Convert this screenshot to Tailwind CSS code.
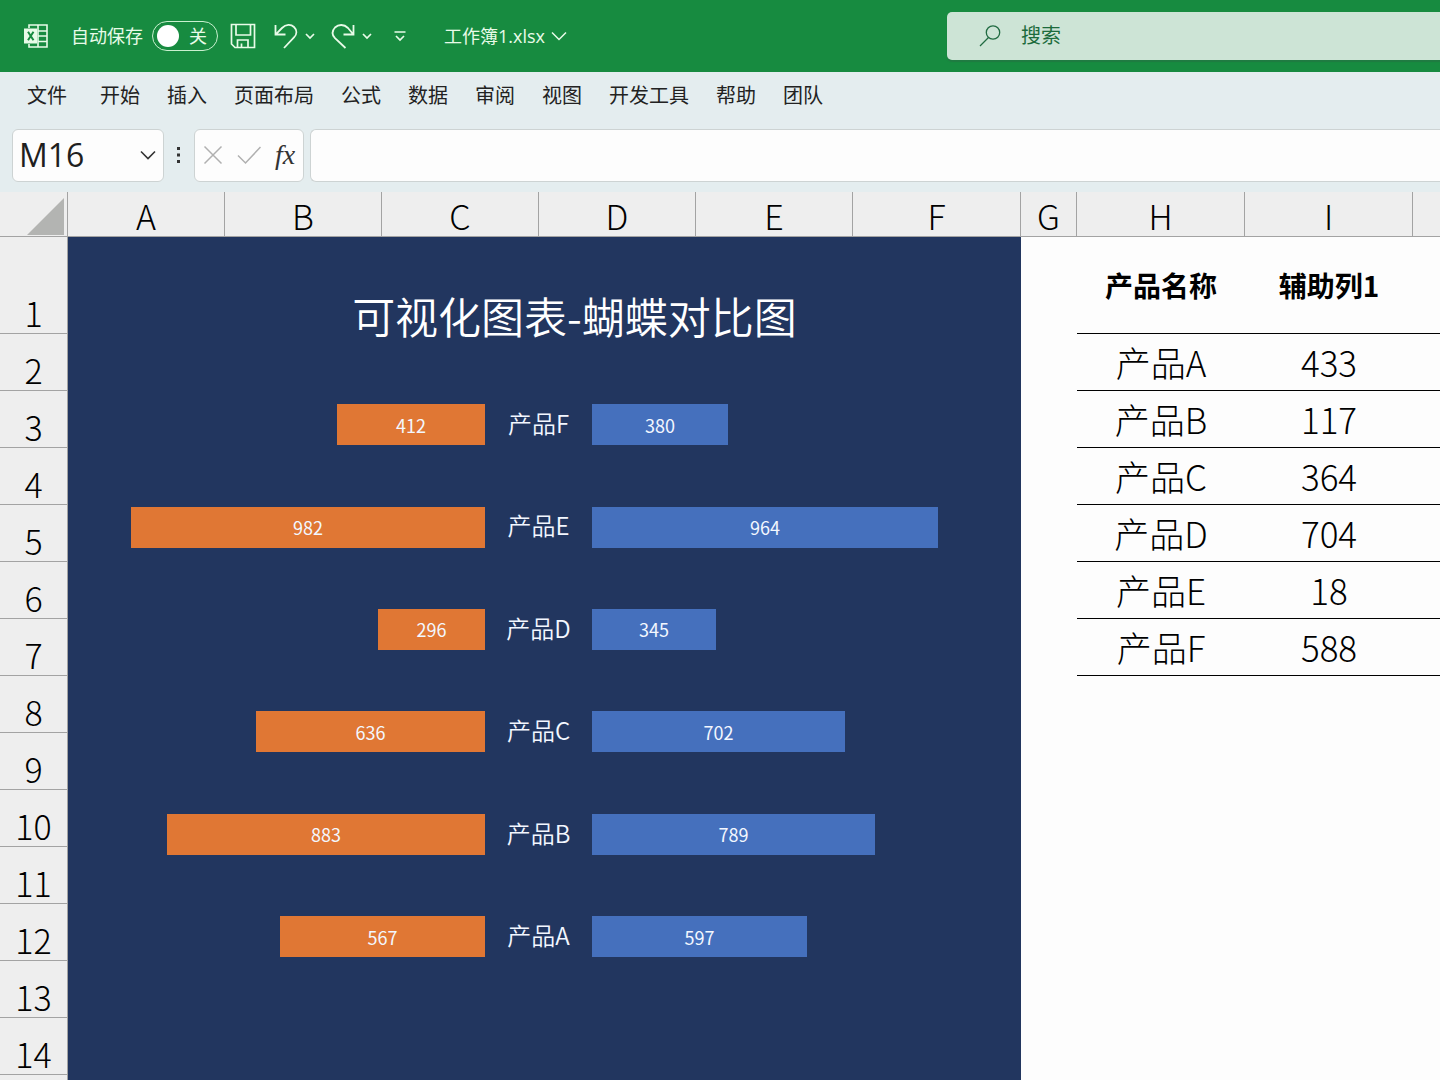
<!DOCTYPE html>
<html lang="zh-CN">
<head>
<meta charset="utf-8">
<meta name="viewport" content="width=device-width, initial-scale=1">
<title>工作簿1.xlsx</title>
<script src="https://cdn.jsdelivr.net/npm/@tailwindcss/browser@4"></script>
</head>
<body class="flex h-screen flex-col overflow-hidden bg-[#fdfdfd] font-['Open_Sans','Noto_Sans_CJK_SC',sans-serif]">

<!-- Title bar -->
<header class="flex h-18 shrink-0 items-center bg-[#178b40] text-lg text-[#e8fbe8]">
  <div class="flex w-[947px] shrink-0 items-center pl-6">
    <svg class="size-6" viewBox="0 0 24 24" fill="none" stroke="#e8fbe8" stroke-width="1.6" aria-hidden="true">
      <path d="M5 4V1h18v22H5v-3M14 1v22M14 7h9M14 12h9M14 17.500h9"/>
      <path d="M0 4.500h13v15H0z" fill="#e8fbe8" stroke="none"/>
      <path d="M4 7.800l5.500 8.400M9.500 7.800L4 16.200" stroke="#178b40" stroke-width="2"/>
    </svg>
    <label for="autosave" class="ml-[23px]">自动保存</label>
    <span class="relative ml-[9px] flex h-[30px] w-[66px] items-center rounded-full border border-[#c9f0cf]">
      <input id="autosave" type="checkbox" role="switch" class="absolute inset-0 size-full cursor-pointer appearance-none rounded-full">
      <span class="pointer-events-none ml-1 size-[22px] rounded-full bg-white"></span>
      <span class="pointer-events-none ml-2.5">关</span>
    </span>
    <button type="button" class="ml-3" aria-label="保存">
      <svg class="size-[26px]" viewBox="0 0 26 26" fill="none" stroke="#e8fbe8" stroke-width="1.700"><path d="M1.500 1.500h23v23H5l-3.500-3.500zM6 1.500v10.500h14.500v-10.500M7.500 24.500v-7.500h10.500v7.500M11.500 24.500v-4"/></svg>
    </button>
    <button type="button" class="ml-[18px]" aria-label="撤消">
      <svg class="h-[26px] w-6" viewBox="0 0 24 26" fill="none" stroke="#e8fbe8" stroke-width="1.800"><path d="M1.500 2v9.500h10M1.800 11.300L8 5C12 1 17 1.200 20 4c3.300 3.200 3 7.300 0 10.400L10 25"/></svg>
    </button>
    <button type="button" class="ml-1.5" aria-label="撤消选项">
      <svg class="h-2 w-3" viewBox="0 0 12 8" fill="none" stroke="#e8fbe8" stroke-width="1.700"><path d="M2 2l4 4 4-4"/></svg>
    </button>
    <button type="button" class="ml-[15px]" aria-label="恢复">
      <svg class="h-[26px] w-6" viewBox="0 0 24 26" fill="none" stroke="#e8fbe8" stroke-width="1.800"><path d="M22.500 2v9.500h-10M22.200 11.300L17 5C13 1 7.500 1.200 4 4.500 0.800 8 1 12 4 15.200L14.500 25"/></svg>
    </button>
    <button type="button" class="ml-1.5" aria-label="恢复选项">
      <svg class="h-2 w-3" viewBox="0 0 12 8" fill="none" stroke="#e8fbe8" stroke-width="1.700"><path d="M2 2l4 4 4-4"/></svg>
    </button>
    <button type="button" class="ml-5" aria-label="自定义快速访问工具栏">
      <svg class="h-3 w-3.5" viewBox="0 0 14 12" fill="none" stroke="#e8fbe8" stroke-width="1.700"><path d="M1.500 2h11M3 6l4 4 4-4"/></svg>
    </button>
    <button type="button" class="ml-[37px] flex items-center gap-1.5">
      工作簿1.xlsx
      <svg class="h-2.5 w-4" viewBox="0 0 16 10" fill="none" stroke="#e8fbe8" stroke-width="1.500"><path d="M1 1.500l7 7 7-7"/></svg>
    </button>
  </div>
  <div class="flex h-12 min-w-0 grow items-center rounded-l-[5px] bg-[#cde4d6] pl-8 shadow-[0_2px_1px_#207b42]">
    <svg class="size-[22px] shrink-0" viewBox="0 0 22 22" fill="none" stroke="#216b42" stroke-width="1.300" aria-hidden="true"><circle cx="14" cy="7.500" r="6.700"/><path d="M9.500 12.500L1 21"/></svg>
    <input type="search" aria-label="搜索" placeholder="搜索" class="ml-5 min-w-0 grow bg-transparent text-xl text-[#1c6b3c] outline-none placeholder:text-[#1c6b3c]">
  </div>
</header>

<!-- Ribbon tabs -->
<nav class="flex h-12 shrink-0 items-center gap-[27px] bg-[#e4edef] pl-[27px] text-xl text-[#222]">
  <a href="#" class="mr-1.5">文件</a>
  <a href="#">开始</a>
  <a href="#">插入</a>
  <a href="#">页面布局</a>
  <a href="#">公式</a>
  <a href="#">数据</a>
  <a href="#">审阅</a>
  <a href="#">视图</a>
  <a href="#">开发工具</a>
  <a href="#">帮助</a>
  <a href="#">团队</a>
</nav>

<!-- Formula bar -->
<div class="flex h-18 shrink-0 items-center bg-[#e4edef] pb-0.5 pl-3">
  <div class="flex h-[53px] w-[152px] items-center rounded-md border border-[#cdd3d3] bg-[#fdfdfd] pl-1.5">
    <input aria-label="名称框" value="M16" class="w-[113px] bg-transparent text-[32px] text-[#1f1f1f] outline-none">
    <button type="button" class="ml-2" aria-label="名称列表"><svg class="h-2.5 w-4" viewBox="0 0 16 10" fill="none" stroke="#333" stroke-width="1.600"><path d="M1 1.500l7 7 7-7"/></svg></button>
  </div>
  <svg class="ml-3 h-4 w-1.5" viewBox="0 0 6 16" fill="#333" aria-hidden="true"><path d="M1 0h3v3H1zM1 6.500h3v3H1zM1 13h3v3H1z"/></svg>
  <div class="ml-3 flex h-[53px] w-[110px] items-center rounded-md border border-[#cdd3d3] bg-[#fdfdfd] pl-2">
    <button type="button" aria-label="取消"><svg class="size-5" viewBox="0 0 20 20" fill="none" stroke="#b0b0b0" stroke-width="1.500"><path d="M1.500 1.500l17 17M18.500 1.500l-17 17"/></svg></button>
    <button type="button" class="ml-3.5" aria-label="输入"><svg class="h-5 w-6" viewBox="0 0 24 20" fill="none" stroke="#b0b0b0" stroke-width="1.500"><path d="M1 10.500l7.500 7.500L23.500 2"/></svg></button>
    <button type="button" class="ml-3.5 font-['Liberation_Serif',serif] text-[28px] leading-8 text-[#333] italic" aria-label="插入函数">fx</button>
  </div>
  <input aria-label="编辑栏" class="ml-1.5 h-[53px] min-w-0 grow rounded-l-md border border-r-0 border-[#cdd3d3] bg-[#fdfdfd] px-3 text-[32px] outline-none">
</div>

<!-- Worksheet -->
<main class="min-h-0 grow overflow-hidden font-['Noto_Sans_CJK_SC',sans-serif] text-[34px] leading-9 font-light text-black">
  <table class="w-full table-fixed border-separate border-spacing-0 text-center
    [&_thead_th]:h-[45px] [&_thead_th]:border-r [&_thead_th]:border-b [&_thead_th]:border-[#a3a3a3] [&_thead_th]:bg-[#eeeeee] [&_thead_th]:p-0 [&_thead_th]:pt-1 [&_thead_th]:font-light
    [&_tbody_th]:h-[57px] [&_tbody_th]:border-r [&_tbody_th]:border-b [&_tbody_th]:border-[#a3a3a3] [&_tbody_th]:bg-[#eeeeee] [&_tbody_th]:p-0 [&_tbody_th]:pb-0.5 [&_tbody_th]:align-bottom [&_tbody_th]:font-light
    [&_td]:p-0">
    <colgroup>
      <col class="w-[68px]"><col class="w-[157px]"><col class="w-[157px]"><col class="w-[157px]"><col class="w-[157px]"><col class="w-[157px]"><col class="w-[168px]"><col class="w-14"><col class="w-[168px]"><col class="w-[168px]"><col>
    </colgroup>
    <thead>
      <tr>
        <th aria-label="全选"><svg class="mr-[3px] ml-auto size-[37px]" viewBox="0 0 37 37" aria-hidden="true"><path d="M37 0v37H0z" fill="#b3b4b2"/></svg></th>
        <th scope="col">A</th><th scope="col">B</th><th scope="col">C</th><th scope="col">D</th><th scope="col">E</th><th scope="col">F</th><th scope="col">G</th><th scope="col">H</th><th scope="col">I</th><th scope="col" class="border-r-0!"></th>
      </tr>
    </thead>
    <tbody class="text-[35px]">
      <tr>
        <th scope="row" class="h-[97px]! text-[34px]">1</th>
        <td colspan="6" rowspan="15" class="bg-[#22365f] align-top text-white">
          <figure class="pt-[50px]">
            <figcaption class="pl-[60px] text-[43px] leading-[56px] font-[350]">可视化图表-蝴蝶对比图</figcaption>
            <div class="mt-[61px] flex h-[553px] flex-col justify-between text-lg font-normal text-[#f3f7ff]
              [&>div]:grid [&>div]:h-[41px] [&>div]:grid-cols-[417px_107px_1fr] [&>div]:items-center
              [&_b]:pb-1 [&_b]:text-[24px] [&_b]:font-[350]
              [&_i]:flex [&_i]:h-[41px] [&_i]:items-center [&_i]:justify-center [&_i]:not-italic">
              <div><i class="ml-auto bg-[#e07734]" style="width:148px">412</i><b>产品F</b><i class="bg-[#4570bd]" style="width:136px">380</i></div>
              <div><i class="ml-auto bg-[#e07734]" style="width:354px">982</i><b>产品E</b><i class="bg-[#4570bd]" style="width:346px">964</i></div>
              <div><i class="ml-auto bg-[#e07734]" style="width:107px">296</i><b>产品D</b><i class="bg-[#4570bd]" style="width:124px">345</i></div>
              <div><i class="ml-auto bg-[#e07734]" style="width:229px">636</i><b>产品C</b><i class="bg-[#4570bd]" style="width:253px">702</i></div>
              <div><i class="ml-auto bg-[#e07734]" style="width:318px">883</i><b>产品B</b><i class="bg-[#4570bd]" style="width:283px">789</i></div>
              <div><i class="ml-auto bg-[#e07734]" style="width:205px">567</i><b>产品A</b><i class="bg-[#4570bd]" style="width:215px">597</i></div>
            </div>
          </figure>
        </td>
        <td></td>
        <td class="border-b border-black text-[28px] font-bold">产品名称</td><td class="border-b border-black text-[28px] font-bold">辅助列1</td><td class="border-b border-black"></td>
      </tr>
      <tr><th scope="row" class="text-[34px]">2</th><td></td><td class="border-b border-black">产品A</td><td class="border-b border-black">433</td><td class="border-b border-black"></td></tr>
      <tr><th scope="row" class="text-[34px]">3</th><td></td><td class="border-b border-black">产品B</td><td class="border-b border-black">117</td><td class="border-b border-black"></td></tr>
      <tr><th scope="row" class="text-[34px]">4</th><td></td><td class="border-b border-black">产品C</td><td class="border-b border-black">364</td><td class="border-b border-black"></td></tr>
      <tr><th scope="row" class="text-[34px]">5</th><td></td><td class="border-b border-black">产品D</td><td class="border-b border-black">704</td><td class="border-b border-black"></td></tr>
      <tr><th scope="row" class="text-[34px]">6</th><td></td><td class="border-b border-black">产品E</td><td class="border-b border-black">18</td><td class="border-b border-black"></td></tr>
      <tr><th scope="row" class="text-[34px]">7</th><td></td><td class="border-b border-black">产品F</td><td class="border-b border-black">588</td><td class="border-b border-black"></td></tr>
      <tr><th scope="row" class="text-[34px]">8</th><td colspan="4"></td></tr>
      <tr><th scope="row" class="text-[34px]">9</th><td colspan="4"></td></tr>
      <tr><th scope="row" class="text-[34px]">10</th><td colspan="4"></td></tr>
      <tr><th scope="row" class="text-[34px]">11</th><td colspan="4"></td></tr>
      <tr><th scope="row" class="text-[34px]">12</th><td colspan="4"></td></tr>
      <tr><th scope="row" class="text-[34px]">13</th><td colspan="4"></td></tr>
      <tr><th scope="row" class="text-[34px]">14</th><td colspan="4"></td></tr>
      <tr><th scope="row"></th><td colspan="4"></td></tr>
    </tbody>
  </table>
</main>
</body>
</html>
